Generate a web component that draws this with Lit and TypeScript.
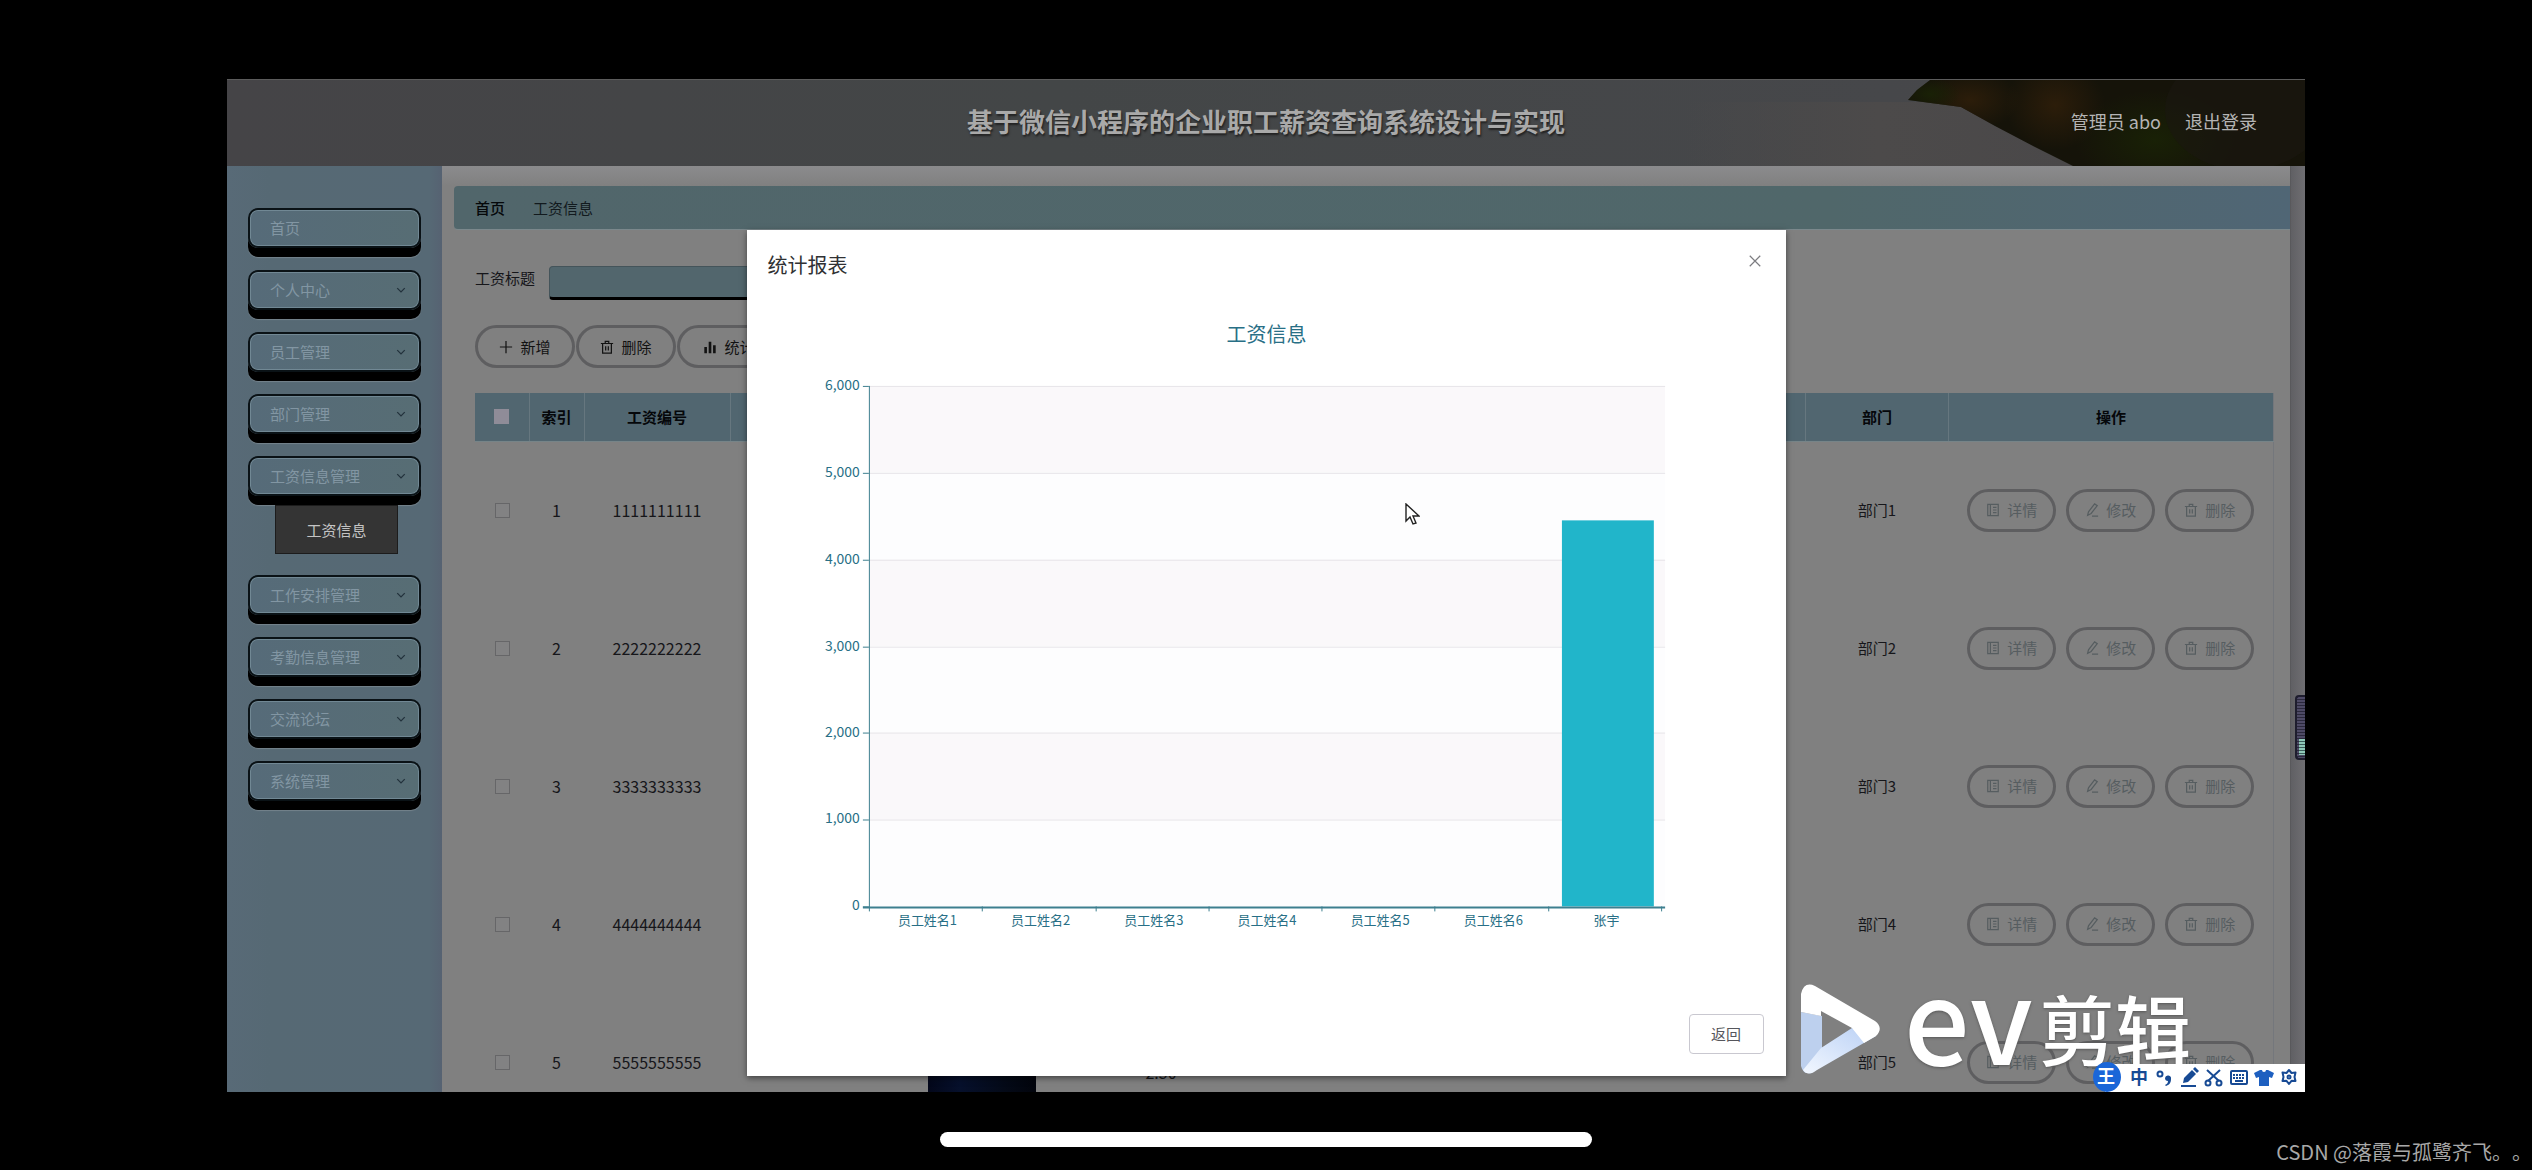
import { LitElement, html, css, svg, nothing } from "lit";
import { customElement, property } from "lit/decorators.js";

const fontStack = css`"Noto Sans CJK SC", "Noto Sans", sans-serif`;

const glyphs: Record<string, unknown> = {
  plus: svg`<path d="M8 1v14M1 8h14" />`,
  trash: svg`<path d="M1 4h14M3 4v11h10V4M6 4V1.5h4V4M6.5 7v5M9.5 7v5" />`,
  bars: svg`<path d="M3 8v7M8 2v13M13 6v9" stroke-width="3" />`,
  doc: svg`<path d="M2 1.5h12v13H2zM5 1.5v13M8 5h4M8 8h4M8 11h4" />`,
  pen: svg`<path d="M3 14l1-4 7-9 3 2-7 9zM8 15h7" />`,
  chevron: svg`<path d="M2 5l6 6 6-6" stroke-width="2" />`,
  close: svg`<path d="M2 2l12 12M14 2L2 14" />`,
};

@customElement("ui-icon")
export class UiIcon extends LitElement {
  @property() name = "plus";
  static styles = css`
    :host { display: inline-flex; width: 14px; height: 14px; }
    .glyph { width: 100%; height: 100%; fill: none; stroke: currentColor; stroke-width: 1.4; }
  `;
  render() {
    return html`<svg class="glyph" viewBox="0 0 16 16" aria-hidden="true">${glyphs[this.name]}</svg>`;
  }
}

@customElement("top-header")
export class TopHeader extends LitElement {
  static styles = css`
    :host { display: block; position: relative; font-family: ${fontStack}; }
    .bar { height: 87px; display: grid; grid-template-columns: 1fr auto 1fr; align-items: center; background: linear-gradient(90deg, #454447, #434647 40%, #46474a 80%, #4b494a); border-top: 1px solid #5c5c5c; box-sizing: border-box; padding-bottom: 4px; }
    .photo { position: absolute; right: 0; top: 1px; width: 620px; height: 86px; }
    .title { grid-column: 2; margin: 0; font-size: 26px; line-height: 36px; font-weight: 700; color: #a9a9a9; text-shadow: 1px 2px 2px #222; position: relative; }
    .user { display: flex; justify-content: flex-end; gap: 24px; padding-right: 48px; font-size: 18px; line-height: 24px; color: #b4b4b4; position: relative; }
    .link { color: inherit; text-decoration: none; }
  `;
  render() {
    return html`<header class="bar">
      <svg class="photo" viewBox="0 0 620 86" preserveAspectRatio="none" aria-hidden="true">
        <defs>
          <radialGradient id="rust"><stop offset="0" stop-color="#2c1d0a" /><stop offset="1" stop-color="#2c1d0a" stop-opacity="0" /></radialGradient>
          <radialGradient id="moss"><stop offset="0" stop-color="#192106" /><stop offset="1" stop-color="#192106" stop-opacity="0" /></radialGradient>
          <linearGradient id="road"><stop offset="0" stop-color="#4c4a4a" stop-opacity="0" /><stop offset=".5" stop-color="#4c4a4a" /><stop offset="1" stop-color="#4a4849" /></linearGradient>
          <clipPath id="hill"><path d="M245 0L232 10 223 20 276 27 310 46 350 67 388 86H620V0z" /></clipPath>
        </defs>
        <path d="M0 22H280L388 86H0z" fill="url(#road)" />
        <g clip-path="url(#hill)">
          <rect width="620" height="86" fill="#151309" />
          <ellipse cx="285" cy="20" rx="50" ry="30" fill="url(#rust)" />
          <ellipse cx="370" cy="25" rx="50" ry="45" fill="url(#rust)" />
          <ellipse cx="470" cy="60" rx="80" ry="50" fill="url(#moss)" />
          <ellipse cx="245" cy="14" rx="30" ry="16" fill="url(#moss)" />
          <ellipse cx="560" cy="30" rx="80" ry="60" fill="#1a1710" opacity=".6" />
        </g>
      </svg>
      <h1 class="title">基于微信小程序的企业职工薪资查询系统设计与实现</h1>
      <nav class="user"><span>管理员 abo</span><a class="link" href="#logout">退出登录</a></nav>
    </header>`;
  }
}

const menu = [
  { label: "首页", leaf: true },
  { label: "个人中心" },
  { label: "员工管理" },
  { label: "部门管理" },
  { label: "工资信息管理", child: "工资信息" },
  { label: "工作安排管理" },
  { label: "考勤信息管理" },
  { label: "交流论坛" },
  { label: "系统管理" },
] as { label: string; leaf?: boolean; child?: string }[];

@customElement("side-menu")
export class SideMenu extends LitElement {
  static styles = css`
    :host { display: block; box-sizing: border-box; background: linear-gradient(90deg, #586a77, #566974 20%, #566975 94%, #566272); padding: 42px 21px 0; font-family: ${fontStack}; }
    .list { display: flex; flex-direction: column; gap: 13px; list-style: none; margin: 0; padding: 0; }
    .item { display: flex; align-items: center; width: 100%; height: 40px; box-sizing: border-box; margin-bottom: 9px; padding: 0 13px 0 20px; border: 2px solid #0a1216; border-radius: 10px; background: linear-gradient(90deg, #566b79, #576d74); box-shadow: 0 9px 0 #000, inset 0 0 0 1px #718894, 0 10px 1px #75838c; font: 15px/20px ${fontStack}; color: #8296a3; }
    .name { flex: 1; text-align: left; }
    .arrow { width: 10px; height: 10px; color: #22313b; }
    .child { display: flex; align-items: center; justify-content: center; width: 123px; height: 49px; margin: 0 auto 8px 27px; background: #343434; border: 1px solid #1c1c1c; box-sizing: border-box; color: #c4c4c4; font-size: 15px; line-height: 20px; text-decoration: none; }
  `;
  render() {
    return html`<ul class="list">${menu.map(
      (m) => html`<li>
        <button class="item" type="button"><span class="name">${m.label}</span>${m.leaf ? nothing : html`<ui-icon class="arrow" name="chevron"></ui-icon>`}</button>
        ${m.child ? html`<a class="child" href="#salary">${m.child}</a>` : nothing}
      </li>`,
    )}</ul>`;
  }
}

const rows = [1, 2, 3, 4, 5].map((n) => ({ n, code: String(n).repeat(10), dept: `部门${n}` }));

@customElement("salary-page")
export class SalaryPage extends LitElement {
  static styles = css`
    :host { display: block; box-sizing: border-box; padding: 20px 0 0 12px; background: linear-gradient(#8b8b8d, #808080 20px); font-family: ${fontStack}; color: #16161a; }
    .crumbs { display: flex; align-items: center; gap: 28px; height: 44px; padding: 0 21px; border-radius: 4px 0 0 4px; background: linear-gradient(90deg, #51666b, #50676a 75%, #506675); font-size: 15px; line-height: 20px; border-bottom: 1px solid #7b888c; box-sizing: border-box; }
    .here { font-weight: 500; color: #05080a; }
    .crumb { color: #121a1e; text-decoration: none; }
    .body { padding: 36px 16px 0 21px; }
    .search { display: flex; gap: 14px; font-size: 15px; line-height: 24px; }
    .box { width: 300px; height: 34px; box-sizing: border-box; border: 1px solid #44545a; border-bottom: 3px solid #000; border-radius: 4px; background: #52666d; padding: 0 10px; font: inherit; }
    .tools { display: flex; gap: 1px; margin-top: 25px; }
    .pill { display: inline-flex; align-items: center; justify-content: center; gap: 7px; width: 100px; height: 43px; box-sizing: border-box; padding: 0; border: 3px solid #5e5e60; border-radius: 22px; background: transparent; font: 15px/20px ${fontStack}; color: #121212; }
    .pill.small { width: 89px; gap: 7px; color: #565d60; }
    .pill.wide { width: 134px; }
    .grid { width: 100%; margin-top: 25px; border-collapse: collapse; table-layout: fixed; border-right: 1px solid #74777c; }
    .head { height: 48px; padding: 0; background: #516670; font-size: 15px; line-height: 20px; font-weight: 700; color: #05070a; border-right: 1px solid #66777f; border-bottom: 1px solid #768488; box-sizing: border-box; }
    .head:last-child { border-right: 0; }
    .cell { height: 138px; padding: 0; text-align: center; font-size: 16px; line-height: 22px; box-sizing: border-box; }
    .cell.dept { font-size: 15px; }
    .cell.amount { padding-top: 20px; }
    .tick { appearance: none; display: block; width: 15px; height: 15px; box-sizing: border-box; margin: 0 auto; border: 1px solid #666668; background: #828283; }
    .tick.all { background: #8f8c98; border-color: #8f8c98; }
    .acts { display: flex; justify-content: center; gap: 10px; }
    .thumb { display: block; width: 108px; height: 104px; margin: 0 auto; background: linear-gradient(90deg, #03071a, #06102c 30%, #040a18 70%, #02040c); }
    .c1 { width: 54px; } .c2 { width: 55px; } .c3 { width: 146px; } .c4 { width: 150px; } .c5 { width: 204px; } .c6 { width: 154px; } .c8 { width: 143px; } .c9 { width: 325px; }
  `;
  render() {
    return html`
      <nav class="crumbs"><span class="here">首页</span><a class="crumb" href="#salary">工资信息</a></nav>
      <div class="body">
        <div class="search"><label for="title">工资标题</label><input id="title" class="box" type="text" /></div>
        <div class="tools">
          <button class="pill" type="button"><ui-icon name="plus"></ui-icon>新增</button>
          <button class="pill" type="button"><ui-icon name="trash"></ui-icon>删除</button>
          <button class="pill wide" type="button"><ui-icon name="bars"></ui-icon>统计报表</button>
        </div>
        <table class="grid">
          <colgroup><col class="c1" /><col class="c2" /><col class="c3" /><col class="c4" /><col class="c5" /><col class="c6" /><col /><col class="c8" /><col class="c9" /></colgroup>
          <thead><tr>
            <th class="head"><input class="tick all" type="checkbox" aria-label="全选" /></th>
            <th class="head">索引</th><th class="head">工资编号</th>
            <th class="head"></th><th class="head"></th><th class="head"></th><th class="head"></th>
            <th class="head">部门</th><th class="head">操作</th>
          </tr></thead>
          <tbody>${rows.map(
            (r) => html`<tr>
              <td class="cell"><input class="tick" type="checkbox" aria-label=${r.code} /></td>
              <td class="cell">${r.n}</td><td class="cell">${r.code}</td>
              <td class="cell"></td>
              <td class="cell">${r.n === 5 ? html`<span class="thumb"></span>` : nothing}</td>
              <td class="cell amount">${r.n === 5 ? "2.50" : nothing}</td>
              <td class="cell"></td>
              <td class="cell dept">${r.dept}</td>
              <td class="cell"><div class="acts">
                <button class="pill small" type="button"><ui-icon name="doc"></ui-icon>详情</button>
                <button class="pill small" type="button"><ui-icon name="pen"></ui-icon>修改</button>
                <button class="pill small" type="button"><ui-icon name="trash"></ui-icon>删除</button>
              </div></td>
            </tr>`,
          )}</tbody>
        </table>
      </div>`;
  }
}

const people = [
  { name: "员工姓名1", pay: 0 }, { name: "员工姓名2", pay: 0 }, { name: "员工姓名3", pay: 0 },
  { name: "员工姓名4", pay: 0 }, { name: "员工姓名5", pay: 0 }, { name: "员工姓名6", pay: 0 },
  { name: "张宇", pay: 4450 },
];
const plot = { left: 122, right: 919, top: 86, bottom: 607, max: 6000 };

@customElement("report-dialog")
export class ReportDialog extends LitElement {
  static styles = css`
    :host { display: flex; flex-direction: column; background: #fff; box-shadow: 0 2px 6px rgba(0, 0, 0, 0.5); font-family: ${fontStack}; }
    .head { display: flex; justify-content: space-between; align-items: flex-start; height: 70px; padding: 20px 24px 0 21px; box-sizing: border-box; }
    .title { margin: 0; font-size: 20px; line-height: 30px; font-weight: 400; color: #303133; }
    .close { border: 0; background: none; padding: 4px 0; line-height: 14px; color: #7c7c80; display: flex; }
    .chart { display: block; width: 100%; font-family: ${fontStack}; }
    .caption { font-size: 20px; fill: #286f86; text-anchor: middle; }
    .ylabel { font-size: 14px; fill: #286f86; text-anchor: end; }
    .xlabel { font-size: 13px; fill: #286f86; text-anchor: middle; }
    .axis { stroke: #3d7f8f; stroke-width: 2; fill: none; }
    .yaxis { stroke: #3d7f8f; stroke-width: 1; fill: none; }
    .split { stroke: #e6e4e8; }
    .band { fill: #faf8fa; }
    .alt { fill: #fdfdfe; }
    .bar { fill: #21b5ca; }
    .foot { display: flex; justify-content: flex-end; padding: 75px 22px 22px; }
    .back { width: 75px; height: 40px; box-sizing: border-box; padding: 0; border: 1px solid #c9c8d0; border-radius: 4px; background: #fff; font: 15px/20px ${fontStack}; color: #55565c; }
  `;
  render() {
    const step = (plot.bottom - plot.top) / 6;
    const slot = (915 - plot.left) / people.length;
    return html`
      <div class="head"><h2 class="title">统计报表</h2><button class="close" type="button" aria-label="关闭"><ui-icon name="close"></ui-icon></button></div>
      <svg class="chart" viewBox="0 0 1040 640" role="img" aria-label="工资信息">
        <text class="caption" x="520" y="42">工资信息</text>
        ${[0, 1, 2, 3, 4, 5].map((i) => svg`
          <rect class=${i % 2 ? "alt" : "band"} x=${plot.left} y=${plot.top + i * step} width=${plot.right - plot.left} height=${step} />
          <path class="split" d=${`M${plot.left} ${Math.round(plot.top + i * step) + 0.5}H${plot.right}`} />`)}
        ${[6, 5, 4, 3, 2, 1, 0].map((k, i) => {
          const y = Math.round(plot.top + i * step);
          return svg`<text class="ylabel" x="113" y=${y + 4}>${(k * 1000).toLocaleString("en-US")}</text>
            <path class="yaxis" d=${`M116 ${y + 0.5}H122`} />`;
        })}
        ${people.map((p, i) => {
          const h = (p.pay / plot.max) * (plot.bottom - plot.top);
          const mid = plot.left + slot * (i + 0.5);
          return svg`
            ${p.pay ? svg`<rect class="bar" x=${plot.left + slot * i + 14} y=${plot.bottom - h} width="92" height=${h} />` : nothing}
            <text class="xlabel" x=${mid + 2} y="626">${p.name}</text>
            <path class="yaxis" d=${`M${Math.round(plot.left + slot * (i + 1)) + 0.5} 607V612`} />`;
        })}
        <path class="yaxis" d="M122.5 86V612" />
        <path class="axis" d="M116 608H919" />
      </svg>
      <div class="foot"><button class="back" type="button">返回</button></div>`;
  }
}

@customElement("input-bar")
export class InputBar extends LitElement {
  static styles = css`
    :host { display: flex; align-items: center; background: #fff; width: 200px; height: 28px; color: #174a94; }
    .strip { width: 100%; height: 30px; overflow: visible; font-family: ${fontStack}; }
    .han { font-size: 18px; font-weight: 700; fill: #174a94; text-anchor: middle; }
    .badge { font-size: 18px; font-weight: 700; fill: #fff; text-anchor: middle; }
    .line { fill: none; stroke: #174a94; stroke-width: 2; }
    .solid { fill: #174a94; }
    .shirt { fill: #1d5fc0; }
  `;
  render() {
    return html`<svg class="strip" viewBox="0 0 200 30" aria-hidden="true">
      <ellipse cx="2" cy="14" rx="14" ry="15" fill="#1a66d8" />
      <text class="badge" x="1" y="20">王</text>
      <text class="han" x="34" y="21">中</text>
      <circle class="line" cx="55" cy="11" r="2.5" /><path class="solid" d="M60 15a3 3 0 0 1 6 1c0 4-2 6-5 7l-1-1c2-1 3-2 3-4a3 3 0 0 1-3-3z" />
      <path class="solid" d="M78 20l1-5 8-8 4 4-8 8zM88 6l2-2 4 4-2 2zM76 22h15v2H76z" />
      <path class="line" d="M102 7l12 11M115 7l-12 11" /><circle class="line" cx="103" cy="20" r="2.5" /><circle class="line" cx="114" cy="20" r="2.5" />
      <rect class="line" x="126" y="8" width="16" height="13" rx="1" /><path class="line" stroke-dasharray="2 1" d="M128 12h12M128 15h12" /><path class="line" d="M130 18h8" />
      <path class="shirt" d="M155 7l-6 3 2 5 3-1v9h10v-9l3 1 2-5-6-3h-2a2 2 0 0 1-4 0z" />
      <path class="line" stroke-linejoin="round" d="M184 7l2.500 3 4-.5-1 4.500 1 4-4-.2-2.500 3.200-2.500-3.200-4 .2 1-4-1-4.500 4 .5z" /><circle class="line" cx="184" cy="14" r="1.500" />
    </svg>`;
  }
}

@customElement("app-root")
export class AppRoot extends LitElement {
  static styles = css`
    :host { display: block; }
    .stage { display: flex; flex-direction: column; height: 100vh; box-sizing: border-box; background: #000; font-family: ${fontStack}; overflow: hidden; }
    .screen { position: relative; flex: 1; min-height: 0; margin: 79px 227px 0; display: flex; flex-direction: column; overflow: hidden; background: #808080; }
    .main { flex: 1; min-height: 0; display: grid; grid-template-columns: 215px 1fr 15px; }
    .page { min-width: 0; }
    .track { background: linear-gradient(90deg, #606064, #6f6e72); border-left: 1px solid #59595c; box-sizing: border-box; }
    .dialog { position: absolute; left: 25%; width: 50%; top: 151px; }
    .meter { position: absolute; right: 0; top: 616px; width: 10px; height: 65px; box-sizing: border-box; border: 2px solid #1e1d2e; border-right: 0; border-radius: 4px 0 0 4px; background: repeating-linear-gradient(#4e4a66 0 2px, #2a283c 2px 3px); }
    .level { display: block; margin: 42px 0 0 2px; height: 16px; background: repeating-linear-gradient(#8fc8b8 0 2px, #3d5d5c 2px 3px); }
    .brand { position: absolute; left: 1573px; top: 902px; display: flex; align-items: center; color: #fff; text-shadow: 0 1px 3px #555; height: 96px; }
    .play { width: 82px; height: 94px; }
    .latin { font-size: 116px; line-height: 96px; margin: 0 6px 30px 22px; font-weight: 500; }
    .han { font-size: 76px; line-height: 96px; margin-bottom: 4px; font-weight: 500; }
    .ime { position: absolute; right: 0; bottom: 0; }
    .cursor { position: absolute; left: 1178px; top: 424px; width: 15px; height: 22px; }
    .base { position: relative; height: 78px; display: flex; justify-content: center; padding-top: 40px; box-sizing: border-box; }
    .home { width: 652px; height: 15px; border-radius: 8px; background: #fff; }
    .credit { position: absolute; right: 0; top: 46px; font-size: 20px; line-height: 28px; color: #a8a8a8; white-space: nowrap; text-spacing-trim: space-all; }
  `;
  render() {
    return html`<div class="stage">
      <div class="screen">
        <top-header></top-header>
        <div class="main"><side-menu></side-menu><salary-page class="page"></salary-page><div class="track"></div></div>
        <report-dialog class="dialog" role="dialog" aria-label="统计报表"></report-dialog>
        <div class="meter"><span class="level"></span></div>
        <svg class="cursor" viewBox="0 0 15 22" aria-hidden="true"><path d="M1 1v17l4-4 3 7 3-1-3-7h6z" fill="#fff" stroke="#222" stroke-width="1.400" /></svg>
        <div class="brand">
          <svg class="play" viewBox="0 0 82 94" aria-hidden="true">
            <defs><linearGradient id="ice" x1="0" y1="1" x2="1" y2="0"><stop offset="0" stop-color="#f2f7ff" /><stop offset="1" stop-color="#b9d0f5" /></linearGradient></defs>
            <path d="M1 30V84Q3 93 12 91L22 66V34z" fill="#bdd0ee" />
            <path d="M3 88Q8 95 17 88L76 54 52 46 21 66z" fill="url(#ice)" />
            <path d="M1 12Q4-1 15 4L75 39Q84 46 76 54L64 61 52 46 21 29 21 34 1 30z" fill="#fff" />
          </svg>
          <span class="latin">ev</span><span class="han">剪辑</span>
        </div>
        <input-bar class="ime"></input-bar>
      </div>
      <footer class="base"><div class="home"></div><span class="credit">CSDN @落霞与孤鹭齐飞。。</span></footer>
    </div>`;
  }
}
